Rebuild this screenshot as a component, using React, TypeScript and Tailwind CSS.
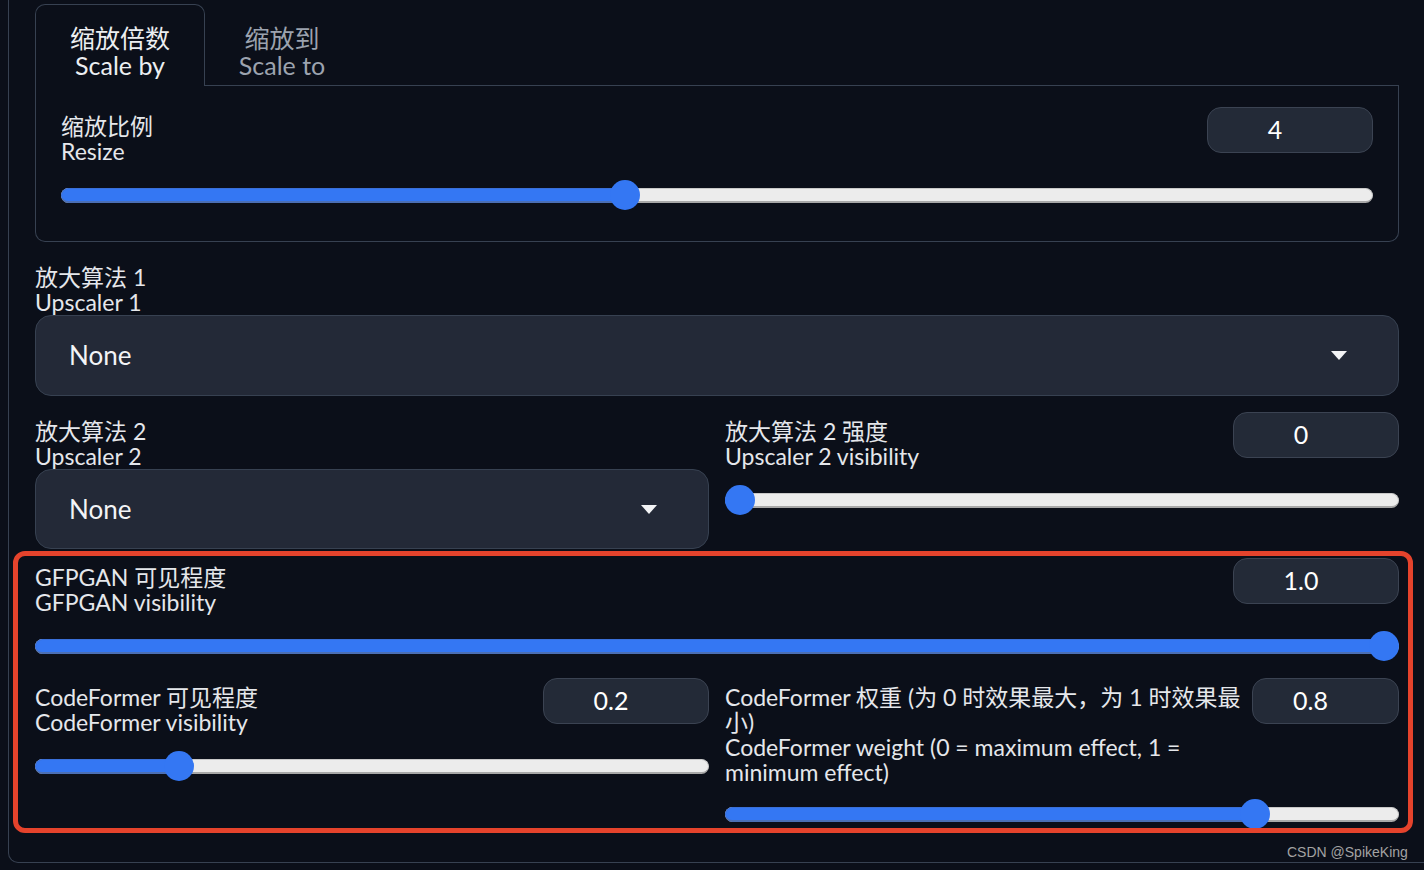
import React from "react";

function Slider({ pct }: { pct: number }) {
  return (
    <div className="relative flex h-[30px] items-center">
      <div className="relative h-[15px] w-full rounded-full border border-[#c8c8c8] border-b-2 border-b-[#a8a8a8] bg-[#ececec]">
        <div
          className="absolute -left-px -top-px -bottom-[2px] rounded-full border border-b-2 border-[#3a6fd8] border-b-[#4b6fb5] bg-[#3477f3]"
          style={{ width: `calc(16px + ${pct} * (100% - 30px))` }}
        />
      </div>
      <div
        className="absolute top-0 h-[30px] w-[30px] rounded-full bg-[#3477f3]"
        style={{ left: `calc(${pct} * (100% - 30px))` }}
      />
    </div>
  );
}

function NumberBox({ value, w }: { value: string; w: string }) {
  return (
    <div
      className={`${w} flex h-[46px] shrink-0 items-center justify-center rounded-[14px] border border-[#3b4352] bg-[#232a37] pr-[30px] text-[25px] text-white`}
    >
      {value}
    </div>
  );
}

function SliderBlock({
  lines,
  value,
  pct,
  w = "w-[166px]",
  tall = false,
}: {
  lines: string[];
  value: string;
  pct: number;
  w?: string;
  tall?: boolean;
}) {
  return (
    <div>
      <div className="flex items-start justify-between gap-2">
        <div className="whitespace-nowrap pt-[7px] text-[23px] leading-[25px] text-[#e5e7eb]">
          {lines.map((l, i) => (
            <div key={i}>{l}</div>
          ))}
        </div>
        <NumberBox value={value} w={w} />
      </div>
      <div className={tall ? "mt-[14px]" : "mt-[16px]"}>
        <Slider pct={pct} />
      </div>
    </div>
  );
}

function Dropdown({ h }: { h: string }) {
  return (
    <div
      className={`${h} flex items-center justify-between rounded-[16px] border border-[#374151] bg-[#232937] pl-[33px] pr-[51px]`}
    >
      <span className="text-[26px] text-[#f3f4f6]">None</span>
      <svg width="16" height="9" viewBox="0 0 16 9">
        <path d="M0 0 L16 0 L8 9 Z" fill="#f3f4f6" />
      </svg>
    </div>
  );
}

export default function App() {
  return (
    <div className="relative h-[870px] w-[1424px] overflow-hidden bg-[#0b0f19] font-['Lato','Noto_Sans_CJK_SC',sans-serif] text-[#e5e7eb]">
      <div className="ml-[8px] h-[863px] rounded-bl-[10px] border-b border-l border-[#374151] pl-[26px] pr-[25px] pt-[4px]">
        {/* Tabs */}
        <div className="flex h-[82px]">
          <div className="w-[170px] rounded-t-[10px] border border-b-0 border-[#374151] pt-[20px] text-center text-[25px] leading-[27px] text-[#eceef1]">
            <div>缩放倍数</div>
            <div>Scale by</div>
          </div>
          <div className="w-[154px] border-b border-[#374151] pt-[21px] text-center text-[25px] leading-[27px] text-[#9ca3af]">
            <div>缩放到</div>
            <div>Scale to</div>
          </div>
          <div className="flex-1 border-b border-[#374151]" />
        </div>
        <div className="rounded-b-[10px] border-x border-b border-[#374151] px-[25px] pb-[31px] pt-[21px]">
          <SliderBlock lines={["缩放比例", "Resize"]} value="4" pct={3 / 7} />
        </div>

        {/* Upscaler 1 */}
        <div className="mt-[23px]">
          <div className="text-[23px] leading-[25px] text-[#e5e7eb]">
            <div>放大算法 1</div>
            <div>Upscaler 1</div>
          </div>
          <Dropdown h="h-[81px]" />
        </div>

        {/* Upscaler 2 row */}
        <div className="mt-[16px] grid grid-cols-2 gap-4">
          <div>
            <div className="pt-[7px] text-[23px] leading-[25px] text-[#e5e7eb]">
              <div>放大算法 2</div>
              <div>Upscaler 2</div>
            </div>
            <Dropdown h="h-[80px]" />
          </div>
          <SliderBlock lines={["放大算法 2 强度", "Upscaler 2 visibility"]} value="0" pct={0} />
        </div>

        {/* GFPGAN */}
        <div className="mt-[9px]">
          <SliderBlock lines={["GFPGAN 可见程度", "GFPGAN visibility"]} value="1.0" pct={1} />
        </div>

        {/* CodeFormer */}
        <div className="mt-[17px] grid grid-cols-2 gap-4">
          <SliderBlock lines={["CodeFormer 可见程度", "CodeFormer visibility"]} value="0.2" pct={0.2} />
          <SliderBlock
            lines={[
              "CodeFormer 权重 (为 0 时效果最大，为 1 时效果最",
              "小)",
              "CodeFormer weight (0 = maximum effect, 1 =",
              "minimum effect)",
            ]}
            value="0.8"
            pct={0.8}
            w="w-[147px]"
            tall
          />
        </div>
      </div>

      {/* red annotation box */}
      <div className="pointer-events-none absolute left-[13px] top-[551px] h-[282px] w-[1400px] rounded-[12px] border-[5px] border-[#e5432c]" />

      {/* watermark */}
      <div className="absolute left-[1287px] top-[843px] font-['Liberation_Sans',sans-serif] text-[14px] leading-[18px] text-[#a3a3a3]">
        CSDN @SpikeKing
      </div>
    </div>
  );
}
